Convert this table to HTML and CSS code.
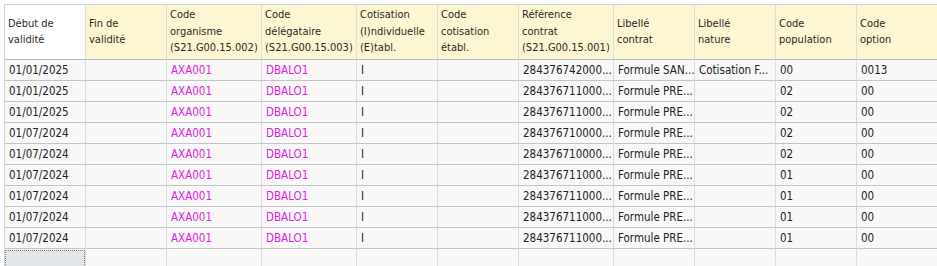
FILE: index.html
```html
<!DOCTYPE html>
<html lang="fr">
<head>
<meta charset="utf-8">
<title>Grille</title>
<link rel="stylesheet" href="styles.css">
</head>
<body>
<div class="grid">
  <div class="hd first"><span>Début de<br>validité</span></div>
  <div class="hd"><span>Fin de<br>validité</span></div>
  <div class="hd"><span>Code<br>organisme<br>(S21.G00.15.002)</span></div>
  <div class="hd"><span>Code<br>délégataire<br>(S21.G00.15.003)</span></div>
  <div class="hd"><span>Cotisation<br>(I)ndividuelle<br>(E)tabl.</span></div>
  <div class="hd"><span>Code<br>cotisation<br>établ.</span></div>
  <div class="hd"><span>Référence<br>contrat<br>(S21.G00.15.001)</span></div>
  <div class="hd"><span>Libellé<br>contrat</span></div>
  <div class="hd"><span>Libellé<br>nature</span></div>
  <div class="hd"><span>Code<br>population</span></div>
  <div class="hd"><span>Code<br>option</span></div>

  <div class="c">01/01/2025</div><div class="c"></div><div class="c m">AXA001</div><div class="c m">DBALO1</div><div class="c">I</div><div class="c"></div><div class="c">284376742000...</div><div class="c">Formule SAN...</div><div class="c">Cotisation F...</div><div class="c">00</div><div class="c">0013</div>

  <div class="c">01/01/2025</div><div class="c"></div><div class="c m">AXA001</div><div class="c m">DBALO1</div><div class="c">I</div><div class="c"></div><div class="c">284376711000...</div><div class="c">Formule PRE...</div><div class="c"></div><div class="c">02</div><div class="c">00</div>

  <div class="c">01/01/2025</div><div class="c"></div><div class="c m">AXA001</div><div class="c m">DBALO1</div><div class="c">I</div><div class="c"></div><div class="c">284376711000...</div><div class="c">Formule PRE...</div><div class="c"></div><div class="c">02</div><div class="c">00</div>

  <div class="c">01/07/2024</div><div class="c"></div><div class="c m">AXA001</div><div class="c m">DBALO1</div><div class="c">I</div><div class="c"></div><div class="c">284376710000...</div><div class="c">Formule PRE...</div><div class="c"></div><div class="c">02</div><div class="c">00</div>

  <div class="c">01/07/2024</div><div class="c"></div><div class="c m">AXA001</div><div class="c m">DBALO1</div><div class="c">I</div><div class="c"></div><div class="c">284376710000...</div><div class="c">Formule PRE...</div><div class="c"></div><div class="c">02</div><div class="c">00</div>

  <div class="c">01/07/2024</div><div class="c"></div><div class="c m">AXA001</div><div class="c m">DBALO1</div><div class="c">I</div><div class="c"></div><div class="c">284376711000...</div><div class="c">Formule PRE...</div><div class="c"></div><div class="c">01</div><div class="c">00</div>

  <div class="c">01/07/2024</div><div class="c"></div><div class="c m">AXA001</div><div class="c m">DBALO1</div><div class="c">I</div><div class="c"></div><div class="c">284376711000...</div><div class="c">Formule PRE...</div><div class="c"></div><div class="c">01</div><div class="c">00</div>

  <div class="c">01/07/2024</div><div class="c"></div><div class="c m">AXA001</div><div class="c m">DBALO1</div><div class="c">I</div><div class="c"></div><div class="c">284376711000...</div><div class="c">Formule PRE...</div><div class="c"></div><div class="c">01</div><div class="c">00</div>

  <div class="c">01/07/2024</div><div class="c"></div><div class="c m">AXA001</div><div class="c m">DBALO1</div><div class="c">I</div><div class="c"></div><div class="c">284376711000...</div><div class="c">Formule PRE...</div><div class="c"></div><div class="c">01</div><div class="c">00</div>

  <div class="c new"><span class="focus"></span></div><div class="c"></div><div class="c"></div><div class="c"></div><div class="c"></div><div class="c"></div><div class="c"></div><div class="c"></div><div class="c"></div><div class="c"></div><div class="c"></div>
</div>
</body>
</html>
```

FILE: styles.css
```css
html, body {
  margin: 0;
  padding: 0;
  background: #ffffff;
  overflow: hidden;
}
body {
  padding: 4px 0 0 4px;
  font-family: "DejaVu Sans Condensed", "DejaVu Sans", sans-serif;
  font-stretch: condensed;
  font-size: 11.5px;
  color: #222222;
}
.grid {
  display: grid;
  grid-template-columns: 81px 81px 95px 95px 81px 81px 95px 81px 81px 81px 81px;
  grid-auto-rows: 21px;
  grid-template-rows: 55px;
  border-top: 1px solid #d4d4d4;
  border-left: 1px solid #d4d4d4;
  width: max-content;
}
.hd {
  box-sizing: border-box;
  background: #fdf6d2;
  border-right: 1px solid #dedede;
  border-bottom: 1px solid #b9b9b9;
  padding: 0 3px;
  display: flex;
  align-items: center;
  font-size: 11px;
  line-height: 16.5px;
  white-space: nowrap;
  overflow: hidden;
  color: #2a2a2a;
}
.hd.first {
  background: #ffffff;
}
.c {
  box-sizing: border-box;
  background: #f8f8f8;
  border-right: 1px solid #dcdcdc;
  border-bottom: 1px solid #c4c4c4;
  padding: 0 4px;
  display: flex;
  align-items: center;
  white-space: nowrap;
  overflow: hidden;
}
.c.m {
  color: #dd22dd;
}
.c.new {
  padding: 1px 0 0 0;
  align-items: stretch;
}
.focus {
  flex: 1;
  background: #e2e6e8;
  border: 1px dotted #7a7a7a;
  border-bottom: none;
}
```
